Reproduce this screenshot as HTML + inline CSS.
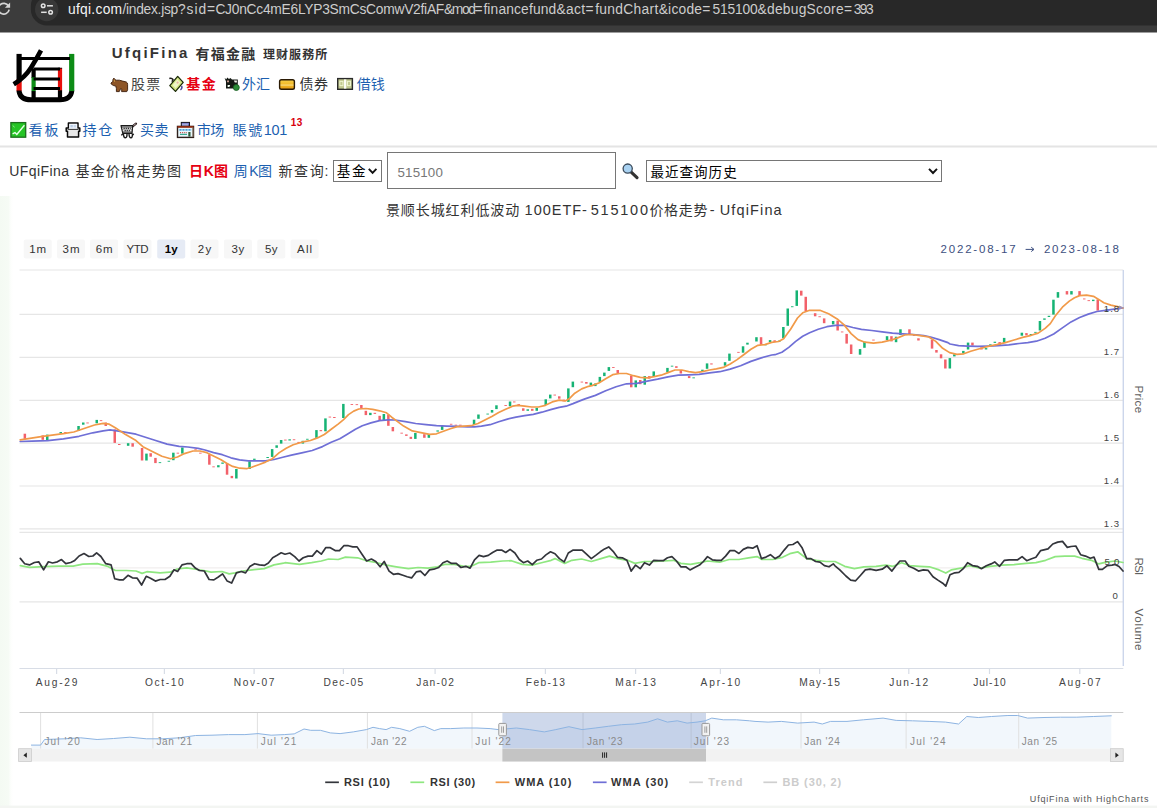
<!DOCTYPE html>
<html lang="zh"><head><meta charset="utf-8"><title>UfqiFina</title>
<style>
html,body{margin:0;padding:0;background:#fff}
body{width:1157px;height:808px;overflow:hidden;position:relative;font-family:"Liberation Sans","Noto Sans CJK SC",sans-serif}
text{font-family:"Liberation Sans","Noto Sans CJK SC",sans-serif;white-space:pre}
</style></head><body>
<svg width="1157" height="808" viewBox="0 0 1157 808" style="position:absolute;left:0;top:0;font-family:'Liberation Sans','Noto Sans CJK SC',sans-serif"><defs><linearGradient id="lt" x1="0" y1="0" x2="1" y2="0"><stop offset="0" stop-color="#f4faf3"/><stop offset="0.6" stop-color="#f6fbf5"/><stop offset="1" stop-color="#ffffff" stop-opacity="0"/></linearGradient></defs><rect x="0" y="196" width="14" height="612" fill="url(#lt)"/><rect x="0" y="805.6" width="1157" height="2.4" fill="#f3f5f2"/><rect x="0" y="0" width="1157" height="32.5" fill="#3c3c3c"/>
<rect x="30.9" y="-10" width="1200" height="35.4" rx="16" fill="#282828"/>
<circle cx="46.7" cy="9.6" r="11.7" fill="#383838"/>
<g stroke="#e2e2e2" stroke-width="1.5" fill="none"><circle cx="43.2" cy="5.8" r="1.8"/><path d="M47 5.8H52.9"/><circle cx="50.6" cy="12.3" r="1.8"/><path d="M41.1 12.3H46.7"/></g>
<path d="M8.5 6A5.4 5.4 0 1 0 9.15 9.7" stroke="#d6d6d6" stroke-width="1.7" fill="none"/><path d="M10.1 2.6V7.8H4.9z" fill="#d6d6d6"/>
<text y="13.9" style="font-size:13.8px;fill:#cdcdcd"><tspan x="68.00" style="letter-spacing:0.28px" fill="#f4f4f4">ufqi.com</tspan><tspan x="122.40" style="letter-spacing:-0.27px">/index.jsp</tspan><tspan x="178.00" style="letter-spacing:0.92px">?sid</tspan><tspan x="207.00" style="letter-spacing:0.34px">=</tspan><tspan x="215.40" style="letter-spacing:-0.26px">CJ0nCc4mE6LYP3SmCsComwV2fiAF</tspan><tspan x="444.00" style="letter-spacing:-1.41px">&amp;mod</tspan><tspan x="474.40" style="letter-spacing:0.94px">=</tspan><tspan x="483.40" style="letter-spacing:0.15px">financefund</tspan><tspan x="556.40" style="letter-spacing:0.35px">&amp;act</tspan><tspan x="585.40" style="letter-spacing:1.74px">=</tspan><tspan x="595.20" style="letter-spacing:0.32px">fundChart</tspan><tspan x="658.70" style="letter-spacing:0.23px">&amp;icode</tspan><tspan x="702.30" style="letter-spacing:2.14px">=</tspan><tspan x="712.50" style="letter-spacing:-0.18px">515100</tspan><tspan x="757.50" style="letter-spacing:0.25px">&amp;debugScore</tspan><tspan x="843.90" style="letter-spacing:1.74px">=</tspan><tspan x="853.70" style="letter-spacing:-1.57px">393</tspan></text>
<g fill="none" stroke-linecap="butt">
<path d="M19.1 53.9V80" stroke="#000" stroke-width="5.2"/>
<path d="M19.1 79.4V91.2" stroke="#e8100c" stroke-width="5.2"/>
<path d="M19.1 90.5V91.5Q20.5 99.8 31 99.8H60Q70.5 99.8 71.7 91.5V90.5" stroke="#000" stroke-width="5"/>
<path d="M71.7 53.9V91.1" stroke="#0d8c16" stroke-width="5.2"/>
<path d="M21 58.6H70" stroke="#000" stroke-width="3"/>
<path d="M41 50.4Q37 58 31 67.7T13.7 84.2" stroke="#000" stroke-width="4.6"/>
<path d="M33.6 68.6V78M33.6 91V99.8" stroke="#000" stroke-width="4.2"/>
<path d="M33.6 77.3V91.1" stroke="#0d8c16" stroke-width="4.2"/>
<path d="M60 67.7V69M60 90V99.8" stroke="#000" stroke-width="4.2"/>
<path d="M60 68.6V90.3" stroke="#e8100c" stroke-width="4.2"/>
<path d="M33.6 69H60M33.6 79H60M33.6 88.5H60" stroke="#000" stroke-width="3"/>
</g>
<text x="111.70" y="58.3" style="font-size:15px;fill:#333;font-weight:bold;letter-spacing:2.25px;">UfqiFina</text>
<text x="195.41" y="58.9" style="font-family:'Liberation Sans','Noto Sans CJK SC',sans-serif;font-size:14px;fill:#333;font-weight:bold;letter-spacing:1.29px;">有福金融</text>
<text x="262.88" y="58.9" style="font-family:'Liberation Sans','Noto Sans CJK SC',sans-serif;font-size:12px;fill:#333;font-weight:bold;letter-spacing:1.11px;">理财服務所</text>
<text x="131.01" y="89.0" style="font-family:'Liberation Sans','Noto Sans CJK SC',sans-serif;font-size:14px;fill:#444;letter-spacing:1.18px;">股票</text>
<text x="186.31" y="88.8" style="font-family:'Liberation Sans','Noto Sans CJK SC',sans-serif;font-size:14px;fill:#e60012;font-weight:bold;letter-spacing:1.38px;">基金</text>
<text x="242.01" y="89.0" style="font-family:'Liberation Sans','Noto Sans CJK SC',sans-serif;font-size:14px;fill:#1c5fb0;letter-spacing:-0.12px;">外汇</text>
<text x="299.41" y="89.0" style="font-family:'Liberation Sans','Noto Sans CJK SC',sans-serif;font-size:14px;fill:#333;letter-spacing:0.58px;">债券</text>
<text x="356.71" y="89.0" style="font-family:'Liberation Sans','Noto Sans CJK SC',sans-serif;font-size:14px;fill:#1c5fb0;letter-spacing:-0.02px;">借钱</text>
<text x="28.61" y="134.6" style="font-family:'Liberation Sans','Noto Sans CJK SC',sans-serif;font-size:14px;fill:#1c5fb0;letter-spacing:1.78px;">看板</text>
<text x="82.51" y="134.6" style="font-family:'Liberation Sans','Noto Sans CJK SC',sans-serif;font-size:14px;fill:#1c5fb0;letter-spacing:1.68px;">持仓</text>
<text x="140.01" y="134.6" style="font-family:'Liberation Sans','Noto Sans CJK SC',sans-serif;font-size:14px;fill:#1c5fb0;letter-spacing:0.58px;">买卖</text>
<text x="197.01" y="134.6" style="font-family:'Liberation Sans','Noto Sans CJK SC',sans-serif;font-size:14px;fill:#1c5fb0;letter-spacing:-0.72px;">市场</text>
<text x="232.81" y="134.6" style="font-family:'Liberation Sans','Noto Sans CJK TC','Noto Sans CJK SC',sans-serif;font-size:14px;fill:#1c5fb0;letter-spacing:1.48px;">賬號</text>
<text x="263.80" y="134.6" style="font-size:14.5px;fill:#1c5fb0;letter-spacing:-0.36px;">101</text>
<text x="290.80" y="125.5" style="font-size:10px;fill:#d8000c;font-weight:bold;letter-spacing:0.30px;">13</text>
<rect x="0" y="145.5" width="1157" height="2" fill="#e4e4e4"/>
<text x="9.30" y="176.3" style="font-size:14px;fill:#333;letter-spacing:0.41px;">UFqiFina</text>
<text x="75.51" y="176.3" style="font-family:'Liberation Sans','Noto Sans CJK SC',sans-serif;font-size:14px;fill:#333;letter-spacing:1.25px;">基金价格走势图</text>
<text x="188.91" y="176.3" style="font-family:'Liberation Sans','Noto Sans CJK SC',sans-serif;font-size:14px;fill:#e60012;font-weight:bold;">日</text>
<text x="203.80" y="176.3" style="font-size:14px;fill:#e60012;font-weight:bold;">K</text>
<text x="214.11" y="176.3" style="font-family:'Liberation Sans','Noto Sans CJK SC',sans-serif;font-size:14px;fill:#e60012;font-weight:bold;">图</text>
<text x="233.71" y="176.3" style="font-family:'Liberation Sans','Noto Sans CJK SC',sans-serif;font-size:14px;fill:#1c5fb0;">周</text>
<text x="249.20" y="176.3" style="font-size:14px;fill:#1c5fb0;">K</text>
<text x="258.11" y="176.3" style="font-family:'Liberation Sans','Noto Sans CJK SC',sans-serif;font-size:14px;fill:#1c5fb0;">图</text>
<text x="278.41" y="176.3" style="font-family:'Liberation Sans','Noto Sans CJK SC',sans-serif;font-size:14px;fill:#333;letter-spacing:1.64px;">新查询</text>
<text x="324.60" y="176.3" style="font-size:14px;fill:#333;">:</text>
<rect x="333.5" y="160.5" width="48" height="21" fill="#fff" stroke="#767676" stroke-width="1"/>
<text x="336.83" y="176.4" style="font-family:'Liberation Sans','Noto Sans CJK SC',sans-serif;font-size:13.5px;fill:#000;letter-spacing:1.64px;">基金</text>
<path d="M368.8 168.8L372.6 172.8L376.4 168.8" fill="none" stroke="#111" stroke-width="1.9"/>
<rect x="387.5" y="152.5" width="228" height="36" fill="#fff" stroke="#767676" stroke-width="1"/>
<text x="397.50" y="176.8" style="font-size:13.33px;fill:#777;letter-spacing:0.17px;">515100</text>
<g><path d="M631.2 172.2L637 177.6" stroke="#333" stroke-width="3.2" stroke-linecap="round"/><circle cx="627.7" cy="168.6" r="4.6" fill="#a9d2f2" stroke="#3a4a5a" stroke-width="1.3"/></g>
<rect x="646.5" y="160.5" width="295" height="21" fill="#fff" stroke="#767676" stroke-width="1"/>
<text x="650.43" y="176.6" style="font-family:'Liberation Sans','Noto Sans CJK SC',sans-serif;font-size:13.5px;fill:#000;letter-spacing:1.05px;">最近查询历史</text>
<path d="M929 168.8L933 173L937 168.8" fill="none" stroke="#111" stroke-width="1.9"/>
<text x="385.91" y="215.0" style="font-family:'Liberation Sans','Noto Sans CJK SC',sans-serif;font-size:14px;fill:#333;letter-spacing:0.92px;">景顺长城红利低波动</text>
<text x="524.60" y="215.2" style="font-size:14.5px;fill:#333;letter-spacing:0.98px;">100ETF-</text>
<text x="590.70" y="215.2" style="font-size:14.5px;fill:#333;letter-spacing:1.79px;">515100</text>
<text x="649.41" y="215.0" style="font-family:'Liberation Sans','Noto Sans CJK SC',sans-serif;font-size:14px;fill:#333;letter-spacing:0.7px;">价格走势</text>
<text x="709.80" y="215.2" style="font-size:14.5px;fill:#333;">-</text>
<text x="719.70" y="215.2" style="font-size:14.5px;fill:#333;letter-spacing:1.14px;">UfqiFina</text>
<path d="M113 79.4L113.9 78.1L115 79.7L116.4 80.2L119.4 80.2L122.6 81.1L126.3 82Q127.6 82.6 127.6 84.5L127.6 89.8L126.8 91.6L121.6 91.6L121.8 89.3L120.6 88.7L119.3 91.6L116.4 91.6L116.4 88.6L115.8 86.1L113.4 85.5L111.2 84L111 83L112.8 81.5Z" fill="#8d5527" stroke="#3a1c0a" stroke-width="0.9" stroke-linejoin="round"/><path d="M113.6 80.4L114.4 79.6L115.2 81.4L114.2 82Z" fill="#c79a4a"/>
<g><path d="M169.3 78.5Q171.6 77.5 173 79.5L172 81.8" fill="none" stroke="#222" stroke-width="1.5"/><path d="M181.5 86Q182.9 88.2 180.4 89.9" fill="none" stroke="#4a4a9a" stroke-width="1.4"/><path d="M177.7 76.4L183.2 82.4L175.5 91.4L169.8 85.6Z" fill="#d3e683" stroke="#1c2c08" stroke-width="1.3" stroke-linejoin="round"/><path d="M177.4 79.2L180.4 82.4L175.6 88.2L172.6 85.2Z" fill="#eef6c6"/><circle cx="177.6" cy="82.6" r="1.1" fill="#e9b0a0"/></g>
<g><path d="M224.6 78L226.4 79.2L227.2 77.6L229 79L230.4 78L232 79.4H237.8V88.6H226V81.5Z" fill="#141a14"/><path d="M233.8 80.4H236.9V82.4H234.8Z" fill="#f2f2ea"/><path d="M227.6 85H230.2L229.4 86.9H227.6Z" fill="#f4fff4"/><path d="M227 80.4H229V82.2H227Z" fill="#c89a90"/><circle cx="236.3" cy="87.5" r="3" fill="#2c8c38" stroke="#155a1e" stroke-width="0.8"/></g>
<defs><linearGradient id="cg" x1="0" y1="0" x2="0" y2="1"><stop offset="0" stop-color="#f7d04a"/><stop offset="0.45" stop-color="#f3bb2a"/><stop offset="0.55" stop-color="#fbe08a"/><stop offset="0.68" stop-color="#efb020"/><stop offset="1" stop-color="#e09612"/></linearGradient></defs><rect x="279.6" y="79.8" width="14.8" height="9.5" rx="1.8" fill="url(#cg)" stroke="#2a1a04" stroke-width="1.4"/>
<rect x="337.7" y="78.6" width="14.7" height="10.7" fill="#c2c990" stroke="#2a2a2a" stroke-width="1.4"/><rect x="344" y="79.4" width="2.3" height="9.2" fill="#fdfdf6"/><rect x="339.9" y="81.4" width="3" height="4.2" fill="none" stroke="#eef3cc" stroke-width="1"/><rect x="347.5" y="81.4" width="3" height="4.2" fill="none" stroke="#eef3cc" stroke-width="1"/>
<rect x="10.9" y="122.6" width="14.8" height="14.6" fill="#25c425" stroke="#1b6e1b" stroke-width="1.3"/><path d="M12.6 133.8L15 132.6L16.8 134.4L24.4 125.2" fill="none" stroke="#e9ffe9" stroke-width="1.4"/><path d="M13 125.5L14.4 127.4" stroke="#8fe88f" stroke-width="1"/>
<g><path d="M68.4 123H78V127.9H79.8V131.3H78.6V137H67.5V131.3H66.2V127.9H68.4Z" fill="#e8e8e8" stroke="#0a0a0a" stroke-width="1.5" stroke-linejoin="round"/><rect x="69.3" y="123.9" width="7.8" height="5" fill="#eef4fc"/><rect x="70.4" y="125" width="2.4" height="2.4" fill="#b8cce4"/><rect x="73.6" y="125" width="2.4" height="2.4" fill="#c8d8ec"/><path d="M67.6 129.4H78.6" stroke="#333" stroke-width="1"/></g>
<g><path d="M132.6 126.4L136 123.6" stroke="#2a1a1a" stroke-width="2.2" stroke-linecap="round"/><path d="M133.4 125.7L135.8 123.8" stroke="#e8d8d8" stroke-width="0.8"/><path d="M121 125.5H132.7L132 133.4H122.8Z" fill="#7c7c7c" stroke="#1c1c1c" stroke-width="1.2" stroke-linejoin="round"/><path d="M122.4 128.4H131.8M122.8 130.6H131.4" stroke="#e2e2e2" stroke-width="1.5"/><path d="M123.6 128.4H130.6M124.6 130.6H129.8" stroke="#111" stroke-width="1.1" stroke-dasharray="1.1 1"/><path d="M122.8 133.6L121.4 135.4M123.4 133.6Q123.6 137.8 125.4 137.8T127 133.8M129 133.8Q129.2 137.8 130.9 137.8T132.4 133.6M132.6 133.6L133.6 135.2" fill="none" stroke="#1a1a1a" stroke-width="1.4"/></g>
<g><rect x="181.3" y="122.4" width="8.2" height="4" fill="#6e74c4" stroke="#151520" stroke-width="1"/><path d="M183 123.6V126M185 123.6V126M187 123.6V126" stroke="#e8ecff" stroke-width="0.9"/><rect x="177.5" y="126.4" width="16" height="11" fill="#e9f7fb" stroke="#30201c" stroke-width="1.4"/><path d="M177.5 126.9H193.5" stroke="#8c2a10" stroke-width="1.8"/><path d="M179.4 129.8H191.6" stroke="#4aa2dc" stroke-width="1.8" stroke-dasharray="2.2 0.8"/><path d="M180 132.6H187" stroke="#c05050" stroke-width="1.4" stroke-dasharray="1 0.9"/><path d="M180 134.4H187" stroke="#3aa890" stroke-width="1.2"/><rect x="188.3" y="132" width="2.2" height="4.6" fill="#2c5a3a"/><path d="M192.9 127.6V137" stroke="#8a7a6a" stroke-width="1.2"/></g>
<path d="M19.5 270.0H1123.3" stroke="#e6e6e6" stroke-width="1.2"/>
<path d="M19.5 314.3H1123.3" stroke="#e6e6e6" stroke-width="1.2"/>
<path d="M19.5 357.3H1123.3" stroke="#e6e6e6" stroke-width="1.2"/>
<path d="M19.5 400.4H1123.3" stroke="#e6e6e6" stroke-width="1.2"/>
<path d="M19.5 443.1H1123.3" stroke="#e6e6e6" stroke-width="1.2"/>
<path d="M19.5 486.0H1123.3" stroke="#e6e6e6" stroke-width="1.2"/>
<path d="M19.5 528.9H1123.3" stroke="#e6e6e6" stroke-width="1.2"/>
<path d="M19.5 532.4H1123.3" stroke="#e6e6e6" stroke-width="1.2"/>
<path d="M19.5 567.8H1123.3" stroke="#f1eeee" stroke-width="1.2"/>
<path d="M19.5 601.8H1123.3" stroke="#e6e6e6" stroke-width="1.2"/>
<path d="M1123.3 270V666" stroke="#ccd6eb" stroke-width="1.4"/>
<path d="M19.5 668.5H1123.3" stroke="#d8dde6" stroke-width="1.2"/>
<path d="M56.6 668.5V674" stroke="#d8dde6" stroke-width="1.2"/>
<text x="35.80" y="685.6" style="font-size:10.2px;fill:#444;letter-spacing:1.74px;">Aug-29</text>
<path d="M164.4 668.5V674" stroke="#d8dde6" stroke-width="1.2"/>
<text x="145.10" y="685.6" style="font-size:10.2px;fill:#444;letter-spacing:1.60px;">Oct-10</text>
<path d="M254.1 668.5V674" stroke="#d8dde6" stroke-width="1.2"/>
<text x="233.80" y="685.6" style="font-size:10.2px;fill:#444;letter-spacing:1.54px;">Nov-07</text>
<path d="M343.4 668.5V674" stroke="#d8dde6" stroke-width="1.2"/>
<text x="323.60" y="685.6" style="font-size:10.2px;fill:#444;letter-spacing:1.34px;">Dec-05</text>
<path d="M435.1 668.5V674" stroke="#d8dde6" stroke-width="1.2"/>
<text x="416.30" y="685.6" style="font-size:10.2px;fill:#444;letter-spacing:1.28px;">Jan-02</text>
<path d="M545.4 668.5V674" stroke="#d8dde6" stroke-width="1.2"/>
<text x="525.85" y="685.6" style="font-size:10.2px;fill:#444;letter-spacing:1.35px;">Feb-13</text>
<path d="M635.6 668.5V674" stroke="#d8dde6" stroke-width="1.2"/>
<text x="615.30" y="685.6" style="font-size:10.2px;fill:#444;letter-spacing:1.65px;">Mar-13</text>
<path d="M720.4 668.5V674" stroke="#d8dde6" stroke-width="1.2"/>
<text x="700.60" y="685.6" style="font-size:10.2px;fill:#444;letter-spacing:1.80px;">Apr-10</text>
<path d="M819.6 668.5V674" stroke="#d8dde6" stroke-width="1.2"/>
<text x="799.30" y="685.6" style="font-size:10.2px;fill:#444;letter-spacing:1.32px;">May-15</text>
<path d="M908.8 668.5V674" stroke="#d8dde6" stroke-width="1.2"/>
<text x="889.30" y="685.6" style="font-size:10.2px;fill:#444;letter-spacing:1.56px;">Jun-12</text>
<path d="M989.5 668.5V674" stroke="#d8dde6" stroke-width="1.2"/>
<text x="973.20" y="685.6" style="font-size:10.2px;fill:#444;letter-spacing:0.96px;">Jul-10</text>
<path d="M1079.8 668.5V674" stroke="#d8dde6" stroke-width="1.2"/>
<text x="1059.00" y="685.6" style="font-size:10.2px;fill:#444;letter-spacing:1.74px;">Aug-07</text>
<text x="-0.00" y="0" style="font-size:11.6px;fill:#606060;letter-spacing:0.34px;" transform="translate(1134.5 385.4) rotate(90)">Price</text>
<text x="-0.00" y="0" style="font-size:11.6px;fill:#606060;letter-spacing:-0.91px;" transform="translate(1134.5 557.6) rotate(90)">RSI</text>
<text x="-0.00" y="0" style="font-size:11.6px;fill:#606060;letter-spacing:0.66px;" transform="translate(1134.5 608.6) rotate(90)">Volume</text>
<rect x="23.7" y="239.4" width="28" height="19.2" rx="2" fill="#f7f7f7"/>
<text x="29.30" y="253.4" style="font-size:11.5px;fill:#333;letter-spacing:0.81px;">1m</text>
<rect x="57.0" y="239.4" width="28" height="19.2" rx="2" fill="#f7f7f7"/>
<text x="62.45" y="253.4" style="font-size:11.5px;fill:#333;letter-spacing:1.11px;">3m</text>
<rect x="90.1" y="239.4" width="28" height="19.2" rx="2" fill="#f7f7f7"/>
<text x="95.70" y="253.4" style="font-size:11.5px;fill:#333;letter-spacing:0.82px;">6m</text>
<rect x="123.5" y="239.4" width="28" height="19.2" rx="2" fill="#f7f7f7"/>
<text x="126.50" y="253.4" style="font-size:11.5px;fill:#333;letter-spacing:-0.50px;">YTD</text>
<rect x="157.2" y="239.4" width="28" height="19.2" rx="2" fill="#e6ebf5"/>
<text x="164.80" y="253.4" style="font-size:11.5px;fill:#000;font-weight:bold;letter-spacing:0.04px;">1y</text>
<rect x="190.5" y="239.4" width="28" height="19.2" rx="2" fill="#f7f7f7"/>
<text x="197.80" y="253.4" style="font-size:11.5px;fill:#333;letter-spacing:1.27px;">2y</text>
<rect x="223.9" y="239.4" width="28" height="19.2" rx="2" fill="#f7f7f7"/>
<text x="231.50" y="253.4" style="font-size:11.5px;fill:#333;letter-spacing:0.67px;">3y</text>
<rect x="257.3" y="239.4" width="28" height="19.2" rx="2" fill="#f7f7f7"/>
<text x="265.05" y="253.4" style="font-size:11.5px;fill:#333;letter-spacing:0.37px;">5y</text>
<rect x="290.6" y="239.4" width="28" height="19.2" rx="2" fill="#f7f7f7"/>
<text x="297.05" y="253.4" style="font-size:11.5px;fill:#333;letter-spacing:1.17px;">All</text>
<text x="940.60" y="253.2" style="font-size:11.5px;fill:#3d4f80;letter-spacing:1.79px;">2022-08-17</text>
<path d="M1025.6 249.4H1033.6M1031.2 247.2L1034 249.4L1031.2 251.6" fill="none" stroke="#3d4f80" stroke-width="1"/>
<text x="1043.90" y="253.2" style="font-size:11.5px;fill:#3d4f80;letter-spacing:1.79px;">2023-08-18</text>
<rect x="23.6" y="433.7" width="2.5" height="5.2" fill="#f2616a"/>
<rect x="41.5" y="435.4" width="2.5" height="4.4" fill="#f2616a"/>
<rect x="46.0" y="434.6" width="2.5" height="6.0" fill="#16b374"/>
<rect x="59.5" y="432.0" width="2.5" height="1.4" fill="#16b374"/>
<rect x="64.2" y="432.0" width="2.5" height="1.4" fill="#f2616a"/>
<rect x="77.3" y="426.0" width="2.5" height="5.0" fill="#16b374"/>
<rect x="82.0" y="422.5" width="2.5" height="2.2" fill="#16b374"/>
<rect x="86.3" y="422.5" width="2.5" height="0.9" fill="#f2616a"/>
<rect x="95.5" y="419.9" width="2.5" height="3.4" fill="#16b374"/>
<rect x="99.8" y="420.2" width="2.5" height="0.9" fill="#f2616a"/>
<rect x="104.5" y="422.5" width="2.5" height="3.5" fill="#f2616a"/>
<rect x="113.5" y="429.4" width="2.5" height="13.5" fill="#f2616a"/>
<rect x="118.0" y="444.0" width="2.5" height="1.0" fill="#f2616a"/>
<rect x="126.9" y="443.2" width="2.5" height="2.6" fill="#16b374"/>
<rect x="131.4" y="443.2" width="2.5" height="3.5" fill="#f2616a"/>
<rect x="140.8" y="448.0" width="2.5" height="12.5" fill="#f2616a"/>
<rect x="145.2" y="453.6" width="2.5" height="6.9" fill="#16b374"/>
<rect x="149.4" y="453.2" width="2.5" height="3.5" fill="#f2616a"/>
<rect x="154.2" y="457.9" width="2.5" height="5.2" fill="#f2616a"/>
<rect x="158.7" y="462.2" width="2.5" height="0.9" fill="#16b374"/>
<rect x="167.6" y="460.8" width="2.5" height="0.9" fill="#16b374"/>
<rect x="172.1" y="452.7" width="2.5" height="7.5" fill="#16b374"/>
<rect x="176.6" y="452.7" width="2.5" height="0.9" fill="#f2616a"/>
<rect x="181.1" y="447.5" width="2.5" height="6.1" fill="#16b374"/>
<rect x="194.3" y="449.3" width="2.5" height="0.9" fill="#f2616a"/>
<rect x="199.1" y="452.7" width="2.5" height="0.9" fill="#f2616a"/>
<rect x="208.1" y="454.3" width="2.5" height="10.4" fill="#f2616a"/>
<rect x="212.3" y="466.4" width="2.5" height="0.9" fill="#f2616a"/>
<rect x="217.1" y="465.2" width="2.5" height="2.1" fill="#16b374"/>
<rect x="221.3" y="462.5" width="2.5" height="1.3" fill="#16b374"/>
<rect x="225.8" y="463.0" width="2.5" height="11.7" fill="#f2616a"/>
<rect x="230.6" y="475.9" width="2.5" height="2.3" fill="#f2616a"/>
<rect x="235.1" y="469.0" width="2.5" height="9.5" fill="#16b374"/>
<rect x="248.3" y="461.2" width="2.5" height="7.8" fill="#16b374"/>
<rect x="253.1" y="458.7" width="2.5" height="1.2" fill="#16b374"/>
<rect x="266.4" y="457.0" width="2.5" height="1.0" fill="#16b374"/>
<rect x="270.9" y="449.1" width="2.5" height="7.8" fill="#16b374"/>
<rect x="275.4" y="445.3" width="2.5" height="2.5" fill="#16b374"/>
<rect x="279.9" y="440.0" width="2.5" height="3.6" fill="#16b374"/>
<rect x="284.1" y="439.6" width="2.5" height="0.9" fill="#f2616a"/>
<rect x="288.4" y="439.3" width="2.5" height="1.2" fill="#16b374"/>
<rect x="292.8" y="439.3" width="2.5" height="0.9" fill="#f2616a"/>
<rect x="297.4" y="441.9" width="2.5" height="1.0" fill="#f2616a"/>
<rect x="301.6" y="440.8" width="2.5" height="2.8" fill="#16b374"/>
<rect x="306.1" y="438.8" width="2.5" height="0.9" fill="#16b374"/>
<rect x="315.2" y="430.1" width="2.5" height="7.8" fill="#16b374"/>
<rect x="319.6" y="430.1" width="2.5" height="1.1" fill="#f2616a"/>
<rect x="324.2" y="418.4" width="2.5" height="12.9" fill="#16b374"/>
<rect x="328.6" y="416.6" width="2.5" height="0.9" fill="#f2616a"/>
<rect x="333.1" y="417.0" width="2.5" height="1.0" fill="#f2616a"/>
<rect x="342.1" y="403.9" width="2.5" height="14.1" fill="#16b374"/>
<rect x="350.6" y="404.0" width="2.5" height="0.9" fill="#f2616a"/>
<rect x="355.6" y="404.2" width="2.5" height="0.9" fill="#f2616a"/>
<rect x="360.1" y="405.0" width="2.5" height="3.5" fill="#f2616a"/>
<rect x="364.6" y="410.8" width="2.5" height="4.3" fill="#f2616a"/>
<rect x="369.1" y="412.8" width="2.5" height="2.3" fill="#16b374"/>
<rect x="373.6" y="412.8" width="2.5" height="1.1" fill="#f2616a"/>
<rect x="378.4" y="415.8" width="2.5" height="4.3" fill="#f2616a"/>
<rect x="382.6" y="414.0" width="2.5" height="6.1" fill="#16b374"/>
<rect x="387.1" y="414.6" width="2.5" height="11.2" fill="#f2616a"/>
<rect x="391.6" y="427.0" width="2.5" height="4.3" fill="#f2616a"/>
<rect x="400.4" y="432.7" width="2.5" height="0.9" fill="#f2616a"/>
<rect x="405.1" y="434.4" width="2.5" height="1.5" fill="#f2616a"/>
<rect x="409.6" y="436.8" width="2.5" height="2.1" fill="#f2616a"/>
<rect x="414.1" y="433.0" width="2.5" height="5.9" fill="#16b374"/>
<rect x="423.1" y="434.2" width="2.5" height="3.6" fill="#f2616a"/>
<rect x="427.6" y="434.2" width="2.5" height="3.6" fill="#16b374"/>
<rect x="436.4" y="430.4" width="2.5" height="1.2" fill="#16b374"/>
<rect x="440.9" y="425.5" width="2.5" height="4.4" fill="#16b374"/>
<rect x="449.9" y="423.8" width="2.5" height="0.9" fill="#f2616a"/>
<rect x="454.6" y="424.7" width="2.5" height="0.9" fill="#f2616a"/>
<rect x="459.1" y="424.7" width="2.5" height="0.9" fill="#f2616a"/>
<rect x="472.8" y="419.7" width="2.5" height="5.0" fill="#16b374"/>
<rect x="477.2" y="414.5" width="2.5" height="4.3" fill="#16b374"/>
<rect x="486.4" y="413.6" width="2.5" height="0.9" fill="#16b374"/>
<rect x="490.8" y="410.0" width="2.5" height="2.6" fill="#16b374"/>
<rect x="495.2" y="405.3" width="2.5" height="3.8" fill="#16b374"/>
<rect x="504.4" y="405.0" width="2.5" height="0.9" fill="#f2616a"/>
<rect x="508.8" y="401.5" width="2.5" height="4.7" fill="#16b374"/>
<rect x="513.0" y="401.5" width="2.5" height="0.9" fill="#f2616a"/>
<rect x="517.5" y="404.1" width="2.5" height="1.6" fill="#f2616a"/>
<rect x="522.0" y="408.3" width="2.5" height="2.5" fill="#f2616a"/>
<rect x="526.5" y="409.3" width="2.5" height="1.5" fill="#16b374"/>
<rect x="531.0" y="408.8" width="2.5" height="2.0" fill="#f2616a"/>
<rect x="535.5" y="407.9" width="2.5" height="2.9" fill="#16b374"/>
<rect x="544.5" y="399.3" width="2.5" height="5.7" fill="#16b374"/>
<rect x="549.0" y="394.6" width="2.5" height="3.8" fill="#16b374"/>
<rect x="553.5" y="394.6" width="2.5" height="0.9" fill="#f2616a"/>
<rect x="558.0" y="396.3" width="2.5" height="2.4" fill="#f2616a"/>
<rect x="562.5" y="399.6" width="2.5" height="1.7" fill="#f2616a"/>
<rect x="567.1" y="388.4" width="2.5" height="13.5" fill="#16b374"/>
<rect x="571.6" y="381.6" width="2.5" height="5.6" fill="#16b374"/>
<rect x="580.6" y="381.6" width="2.5" height="0.9" fill="#f2616a"/>
<rect x="585.1" y="382.0" width="2.5" height="1.7" fill="#f2616a"/>
<rect x="589.6" y="382.6" width="2.5" height="3.3" fill="#16b374"/>
<rect x="594.1" y="383.5" width="2.5" height="2.6" fill="#16b374"/>
<rect x="598.6" y="376.9" width="2.5" height="5.2" fill="#16b374"/>
<rect x="603.1" y="372.6" width="2.5" height="3.5" fill="#16b374"/>
<rect x="607.6" y="367.1" width="2.5" height="3.8" fill="#16b374"/>
<rect x="612.1" y="367.1" width="2.5" height="0.9" fill="#f2616a"/>
<rect x="616.5" y="370.0" width="2.5" height="3.5" fill="#f2616a"/>
<rect x="630.0" y="375.5" width="2.5" height="11.8" fill="#f2616a"/>
<rect x="634.5" y="380.4" width="2.5" height="6.9" fill="#16b374"/>
<rect x="639.0" y="380.0" width="2.5" height="4.2" fill="#f2616a"/>
<rect x="643.5" y="376.1" width="2.5" height="8.6" fill="#16b374"/>
<rect x="648.0" y="376.1" width="2.5" height="2.6" fill="#f2616a"/>
<rect x="652.5" y="371.4" width="2.5" height="5.5" fill="#16b374"/>
<rect x="666.2" y="367.9" width="2.5" height="4.4" fill="#16b374"/>
<rect x="670.8" y="365.7" width="2.5" height="0.9" fill="#16b374"/>
<rect x="675.1" y="366.2" width="2.5" height="1.7" fill="#f2616a"/>
<rect x="679.6" y="370.0" width="2.5" height="3.5" fill="#f2616a"/>
<rect x="687.9" y="376.1" width="2.5" height="2.0" fill="#f2616a"/>
<rect x="692.4" y="377.4" width="2.5" height="0.9" fill="#16b374"/>
<rect x="701.2" y="369.7" width="2.5" height="2.0" fill="#16b374"/>
<rect x="705.8" y="363.4" width="2.5" height="5.4" fill="#16b374"/>
<rect x="710.2" y="363.4" width="2.5" height="1.1" fill="#f2616a"/>
<rect x="723.8" y="362.2" width="2.5" height="3.5" fill="#16b374"/>
<rect x="728.2" y="353.6" width="2.5" height="7.2" fill="#16b374"/>
<rect x="737.2" y="351.9" width="2.5" height="0.9" fill="#f2616a"/>
<rect x="741.8" y="346.3" width="2.5" height="6.4" fill="#16b374"/>
<rect x="746.2" y="342.7" width="2.5" height="1.9" fill="#16b374"/>
<rect x="755.2" y="337.2" width="2.5" height="4.3" fill="#16b374"/>
<rect x="759.8" y="337.2" width="2.5" height="7.7" fill="#f2616a"/>
<rect x="764.4" y="344.1" width="2.5" height="1.2" fill="#16b374"/>
<rect x="768.8" y="340.1" width="2.5" height="1.9" fill="#16b374"/>
<rect x="773.4" y="340.3" width="2.5" height="1.7" fill="#f2616a"/>
<rect x="777.9" y="340.6" width="2.5" height="1.4" fill="#16b374"/>
<rect x="782.1" y="327.0" width="2.5" height="11.2" fill="#16b374"/>
<rect x="786.5" y="308.5" width="2.5" height="17.3" fill="#16b374"/>
<rect x="791.0" y="306.3" width="2.5" height="0.9" fill="#16b374"/>
<rect x="795.5" y="290.4" width="2.5" height="15.5" fill="#16b374"/>
<rect x="800.0" y="290.7" width="2.5" height="4.9" fill="#f2616a"/>
<rect x="804.5" y="296.8" width="2.5" height="14.3" fill="#f2616a"/>
<rect x="813.9" y="313.2" width="2.5" height="3.1" fill="#f2616a"/>
<rect x="818.4" y="316.3" width="2.5" height="0.9" fill="#f2616a"/>
<rect x="822.9" y="318.4" width="2.5" height="4.8" fill="#f2616a"/>
<rect x="831.9" y="321.0" width="2.5" height="3.4" fill="#16b374"/>
<rect x="836.4" y="320.6" width="2.5" height="9.9" fill="#f2616a"/>
<rect x="840.9" y="331.5" width="2.5" height="0.9" fill="#f2616a"/>
<rect x="845.4" y="333.9" width="2.5" height="9.7" fill="#f2616a"/>
<rect x="849.9" y="344.5" width="2.5" height="9.5" fill="#f2616a"/>
<rect x="858.8" y="349.1" width="2.5" height="5.6" fill="#16b374"/>
<rect x="863.2" y="341.7" width="2.5" height="6.1" fill="#16b374"/>
<rect x="872.2" y="339.6" width="2.5" height="0.9" fill="#f2616a"/>
<rect x="885.8" y="336.2" width="2.5" height="3.8" fill="#16b374"/>
<rect x="890.2" y="336.2" width="2.5" height="5.2" fill="#f2616a"/>
<rect x="894.8" y="336.7" width="2.5" height="5.5" fill="#16b374"/>
<rect x="899.2" y="329.3" width="2.5" height="5.7" fill="#16b374"/>
<rect x="908.2" y="329.3" width="2.5" height="5.2" fill="#f2616a"/>
<rect x="912.8" y="335.0" width="2.5" height="0.9" fill="#f2616a"/>
<rect x="917.2" y="338.3" width="2.5" height="2.2" fill="#f2616a"/>
<rect x="930.8" y="339.6" width="2.5" height="9.0" fill="#f2616a"/>
<rect x="935.2" y="350.0" width="2.5" height="2.6" fill="#f2616a"/>
<rect x="939.8" y="354.3" width="2.5" height="4.0" fill="#f2616a"/>
<rect x="944.1" y="359.5" width="2.5" height="9.0" fill="#f2616a"/>
<rect x="948.6" y="358.1" width="2.5" height="10.4" fill="#16b374"/>
<rect x="953.1" y="354.3" width="2.5" height="2.1" fill="#16b374"/>
<rect x="962.1" y="350.9" width="2.5" height="2.5" fill="#16b374"/>
<rect x="966.8" y="342.6" width="2.5" height="6.9" fill="#16b374"/>
<rect x="971.2" y="342.6" width="2.5" height="2.9" fill="#f2616a"/>
<rect x="980.2" y="347.4" width="2.5" height="2.1" fill="#f2616a"/>
<rect x="984.8" y="348.1" width="2.5" height="1.4" fill="#16b374"/>
<rect x="989.1" y="344.3" width="2.5" height="1.8" fill="#16b374"/>
<rect x="993.6" y="341.7" width="2.5" height="1.2" fill="#16b374"/>
<rect x="998.4" y="342.1" width="2.5" height="3.4" fill="#f2616a"/>
<rect x="1002.9" y="337.9" width="2.5" height="4.7" fill="#16b374"/>
<rect x="1020.6" y="332.7" width="2.5" height="3.0" fill="#16b374"/>
<rect x="1025.2" y="333.1" width="2.5" height="2.2" fill="#f2616a"/>
<rect x="1029.7" y="334.0" width="2.5" height="1.7" fill="#16b374"/>
<rect x="1034.2" y="331.9" width="2.5" height="0.9" fill="#16b374"/>
<rect x="1038.7" y="321.0" width="2.5" height="9.5" fill="#16b374"/>
<rect x="1043.2" y="318.4" width="2.5" height="1.4" fill="#16b374"/>
<rect x="1047.7" y="315.8" width="2.5" height="1.2" fill="#16b374"/>
<rect x="1052.2" y="299.7" width="2.5" height="14.9" fill="#16b374"/>
<rect x="1056.7" y="292.1" width="2.5" height="5.6" fill="#16b374"/>
<rect x="1065.7" y="291.1" width="2.5" height="3.4" fill="#f2616a"/>
<rect x="1070.2" y="291.1" width="2.5" height="3.4" fill="#16b374"/>
<rect x="1078.3" y="291.1" width="2.5" height="4.8" fill="#f2616a"/>
<rect x="1083.0" y="298.5" width="2.5" height="0.9" fill="#f2616a"/>
<rect x="1087.5" y="300.2" width="2.5" height="0.9" fill="#f2616a"/>
<rect x="1092.0" y="299.7" width="2.5" height="1.4" fill="#16b374"/>
<rect x="1096.5" y="299.4" width="2.5" height="11.2" fill="#f2616a"/>
<rect x="1105.5" y="308.9" width="2.5" height="3.1" fill="#16b374"/>
<path d="M20.2 441.5 L32.3 441.1 L47.8 440.6 L63.4 438.9 L79.0 436.3 L92.8 432.8 L103.2 430.8 L110.0 429.9 L118.7 431.1 L136.0 434.2 L153.3 439.8 L167.1 444.1 L179.2 446.3 L187.9 447.0 L198.2 448.4 L205.0 450.0 L213.6 452.6 L222.3 454.7 L230.9 457.8 L239.6 459.9 L248.2 460.9 L256.9 460.9 L265.5 460.9 L274.1 459.5 L282.8 457.3 L291.4 455.2 L301.8 452.9 L312.2 450.5 L322.5 446.6 L331.2 442.2 L339.8 438.8 L348.5 433.6 L355.4 429.3 L362.3 425.8 L370.9 422.9 L379.6 420.6 L388.2 419.8 L395.0 420.0 L405.4 421.7 L415.7 423.5 L426.1 424.7 L436.5 425.7 L446.9 426.1 L457.2 426.4 L467.6 426.9 L474.5 426.9 L481.4 426.1 L490.1 424.7 L498.7 421.7 L507.4 419.1 L516.0 417.1 L524.6 415.7 L533.3 414.3 L541.9 412.2 L550.6 409.6 L559.2 407.4 L566.1 406.2 L573.0 403.6 L581.7 400.1 L585.0 398.9 L595.4 395.4 L605.7 390.8 L616.1 386.8 L626.5 383.8 L636.9 383.3 L647.2 381.2 L657.6 379.2 L668.0 376.9 L678.3 375.2 L688.7 374.8 L699.1 374.3 L709.5 372.9 L719.8 371.7 L730.2 369.1 L740.6 365.7 L750.9 361.4 L761.3 357.9 L771.7 355.0 L775.0 354.7 L781.9 352.3 L788.8 347.4 L795.7 341.4 L802.7 336.2 L809.6 332.7 L818.2 329.3 L826.9 326.7 L835.5 325.3 L844.1 325.3 L852.8 327.5 L861.4 329.3 L871.8 330.5 L882.2 331.9 L892.5 333.2 L902.9 333.9 L913.3 334.5 L923.7 335.7 L930.6 337.0 L939.2 339.6 L947.9 342.6 L950.0 344.0 L958.6 345.7 L967.3 346.1 L977.7 346.4 L988.0 346.1 L998.4 345.7 L1008.8 344.8 L1019.1 343.5 L1027.8 342.6 L1036.4 341.2 L1045.1 338.3 L1053.7 334.0 L1062.4 327.9 L1071.0 321.9 L1079.6 317.5 L1088.3 314.1 L1096.9 311.5 L1105.6 310.3 L1114.2 309.2 L1122.9 308.0" fill="none" stroke="#6f6fd6" stroke-width="1.7" stroke-linejoin="round" stroke-linecap="round"/>
<path d="M20.2 439.8 L42.7 436.3 L63.4 433.7 L73.8 432.0 L84.1 428.5 L94.5 425.0 L103.2 423.3 L109.2 424.2 L115.3 427.7 L125.6 434.6 L136.0 440.6 L142.9 446.7 L153.3 451.9 L161.9 456.2 L170.6 458.8 L177.5 457.0 L184.4 453.6 L193.0 451.0 L200.0 451.0 L206.9 452.7 L211.9 455.2 L220.6 459.5 L227.5 463.8 L232.7 466.4 L239.6 468.2 L246.5 468.7 L251.7 467.3 L258.6 464.7 L265.5 462.1 L272.4 458.7 L279.3 452.6 L286.2 448.3 L293.2 444.8 L301.8 442.2 L310.4 440.5 L317.4 437.9 L324.3 434.5 L331.2 429.3 L338.1 424.1 L343.3 419.8 L348.5 414.6 L353.7 411.1 L358.8 409.0 L365.8 408.5 L372.7 409.4 L379.6 410.8 L386.5 412.8 L391.7 417.2 L398.6 422.4 L403.6 426.1 L412.3 430.9 L420.9 432.6 L429.6 434.4 L436.5 433.8 L443.4 431.2 L450.3 428.7 L457.2 426.6 L464.1 426.1 L471.1 425.7 L478.0 423.5 L484.9 420.0 L491.8 416.6 L498.7 412.6 L505.6 409.3 L512.5 406.2 L517.7 405.3 L524.6 406.2 L531.6 407.0 L538.5 407.0 L545.4 405.3 L552.3 401.9 L559.2 400.1 L565.3 401.0 L569.6 398.4 L574.8 393.2 L581.7 388.9 L588.6 386.3 L591.9 385.6 L598.8 383.0 L605.7 378.7 L612.7 374.7 L619.6 373.5 L626.5 373.5 L633.4 375.7 L640.3 377.4 L647.2 377.8 L654.1 376.6 L661.1 375.2 L668.0 372.6 L674.9 370.0 L681.8 370.0 L688.7 371.7 L695.6 372.6 L702.5 371.7 L709.5 370.0 L716.4 368.8 L723.3 367.4 L730.2 364.0 L737.1 359.6 L744.0 354.5 L750.9 349.3 L757.9 345.3 L764.8 344.6 L771.7 342.4 L778.6 341.5 L783.6 338.8 L790.6 329.3 L797.5 318.0 L802.7 312.8 L809.6 310.3 L819.9 310.3 L828.6 313.7 L837.2 318.9 L844.1 324.9 L851.1 333.6 L858.0 339.6 L864.9 342.2 L873.5 343.1 L882.2 342.2 L890.8 340.2 L897.7 337.9 L904.7 335.0 L911.6 334.5 L920.2 335.7 L928.8 337.0 L935.8 341.4 L942.7 348.3 L949.6 352.6 L956.9 354.4 L963.8 353.8 L970.7 351.2 L979.4 348.7 L988.0 346.4 L996.7 344.7 L1005.3 342.6 L1014.0 340.0 L1022.6 337.4 L1031.2 335.3 L1038.2 333.1 L1045.1 328.4 L1050.3 323.6 L1055.4 315.8 L1062.4 307.2 L1069.3 301.1 L1074.5 297.7 L1079.6 295.6 L1086.6 295.1 L1093.5 296.3 L1098.7 299.4 L1103.8 302.8 L1110.8 305.1 L1117.7 306.6 L1122.9 308.0" fill="none" stroke="#f19a49" stroke-width="1.7" stroke-linejoin="round" stroke-linecap="round"/>
<path d="M20.3 565.7 L29.5 567.4 L44.0 566.6 L58.6 566.1 L73.1 566.1 L82.8 564.2 L97.3 563.7 L107.0 566.1 L115.4 570.5 L126.3 570.5 L136.0 571.0 L142.1 573.4 L146.9 571.7 L160.2 572.9 L169.9 572.2 L177.2 569.0 L186.8 567.8 L194.1 569.0 L203.8 570.5 L211.0 572.2 L221.9 571.5 L229.2 573.9 L235.2 572.9 L242.5 571.0 L252.2 569.8 L264.3 568.6 L274.0 564.9 L283.6 563.2 L285.0 562.7 L299.5 564.4 L311.6 562.7 L321.3 561.0 L328.6 559.0 L338.2 559.5 L345.5 557.1 L357.6 557.8 L367.3 561.0 L377.0 562.7 L386.6 565.1 L396.3 566.8 L408.4 568.7 L418.1 567.5 L427.8 568.2 L437.5 566.8 L444.7 564.4 L454.4 564.4 L464.1 566.3 L471.3 566.3 L478.6 562.7 L490.7 562.2 L502.8 561.0 L511.3 560.7 L522.2 564.4 L531.9 565.1 L541.5 562.7 L551.2 560.3 L555.0 558.6 L564.7 563.4 L571.9 560.3 L581.6 559.0 L591.3 561.5 L601.0 558.6 L609.5 556.1 L617.9 558.6 L627.6 560.3 L634.9 563.4 L644.5 561.5 L654.2 561.5 L663.9 561.0 L673.6 560.3 L680.8 563.4 L690.5 564.4 L700.2 562.7 L707.5 561.0 L719.6 562.2 L729.2 559.5 L738.9 559.5 L748.6 557.8 L757.1 556.6 L761.9 559.5 L772.8 559.5 L782.5 557.3 L789.8 553.7 L797.7 551.8 L806.7 558.6 L816.4 560.3 L826.1 561.5 L835.0 561.5 L844.7 566.3 L854.4 568.7 L864.0 566.8 L876.1 566.3 L885.8 565.1 L893.1 566.3 L901.6 562.7 L910.0 565.6 L919.7 566.3 L929.4 566.8 L939.1 569.9 L945.8 573.1 L951.2 569.9 L960.8 568.2 L969.3 565.6 L980.2 568.2 L989.9 566.3 L1002.0 565.1 L1014.1 564.6 L1026.2 563.4 L1035.9 562.7 L1045.6 560.3 L1055.2 556.6 L1064.9 556.1 L1074.6 556.1 L1081.9 558.3 L1091.5 560.3 L1098.8 563.9 L1106.1 562.2 L1115.0 561.0 L1123.0 562.5" fill="none" stroke="#8fe780" stroke-width="1.7" stroke-linejoin="round" stroke-linecap="round"/>
<path d="M20.3 558.4 L24.7 563.7 L29.5 564.9 L34.4 562.5 L38.7 561.8 L43.6 569.8 L48.4 561.8 L52.5 563.0 L57.4 561.8 L61.5 559.6 L65.8 563.7 L70.7 562.5 L74.3 560.8 L79.1 556.0 L84.0 553.6 L88.8 556.5 L92.9 556.0 L96.6 552.8 L100.9 556.5 L105.8 563.7 L111.1 564.9 L114.7 578.7 L119.5 579.9 L123.2 579.9 L128.0 575.3 L132.4 577.8 L137.2 578.2 L141.6 585.0 L146.2 576.3 L150.5 578.2 L155.4 581.1 L160.2 579.5 L165.0 579.5 L169.9 576.3 L174.0 569.8 L177.6 571.5 L182.0 564.9 L186.8 563.7 L191.2 563.7 L195.3 568.1 L199.4 570.5 L204.3 571.0 L209.1 579.5 L213.9 579.9 L218.3 577.0 L222.6 573.9 L227.2 581.1 L231.6 583.1 L236.4 572.9 L241.3 571.5 L245.6 572.9 L249.8 566.6 L254.6 563.7 L259.4 564.9 L264.3 565.4 L268.4 563.0 L272.7 557.7 L277.1 555.3 L281.2 552.8 L285.0 554.2 L289.8 553.0 L294.7 556.6 L299.0 561.0 L303.2 557.8 L308.0 556.1 L312.3 556.1 L316.9 550.6 L321.3 554.2 L325.7 547.7 L330.3 547.7 L335.1 550.6 L339.5 550.6 L343.8 545.7 L348.4 545.7 L352.8 546.9 L357.1 546.9 L362.0 554.2 L366.6 561.0 L371.4 559.0 L375.8 561.5 L380.1 566.8 L384.2 561.5 L389.1 571.1 L393.4 574.3 L398.0 573.6 L402.9 575.3 L407.2 576.7 L411.6 577.9 L416.2 571.9 L420.5 571.1 L424.9 575.5 L429.5 569.9 L433.8 569.2 L438.7 567.5 L443.0 562.7 L447.2 561.0 L451.5 563.4 L456.3 563.4 L460.9 567.5 L465.8 566.3 L470.1 568.2 L474.5 559.8 L479.1 555.4 L483.5 556.6 L488.3 555.4 L492.6 552.5 L497.2 550.1 L501.6 550.1 L505.7 552.5 L510.1 549.4 L514.9 553.0 L519.3 559.5 L523.4 562.7 L527.7 561.0 L532.3 564.6 L536.7 560.3 L541.5 559.0 L545.9 554.9 L550.5 551.8 L555.0 553.7 L559.4 558.6 L564.2 561.9 L568.3 553.0 L573.2 550.1 L577.5 550.1 L582.1 550.1 L586.5 554.2 L591.3 558.6 L595.7 555.4 L600.3 551.8 L604.6 548.9 L608.7 546.9 L613.1 551.3 L617.4 557.3 L622.3 557.8 L626.9 560.3 L631.2 571.1 L635.6 565.1 L640.2 568.7 L644.5 562.7 L649.4 565.1 L653.7 560.3 L658.6 560.7 L663.2 560.7 L667.5 557.8 L671.9 556.6 L676.5 561.0 L680.8 566.8 L685.7 566.8 L690.0 569.9 L694.6 567.5 L699.5 565.1 L703.4 561.5 L707.5 556.6 L712.3 559.8 L716.7 560.3 L721.3 560.3 L725.6 556.1 L730.0 550.6 L734.6 550.6 L738.9 553.5 L743.3 549.4 L747.9 547.4 L752.7 548.2 L757.1 545.7 L761.4 558.6 L766.0 557.1 L770.4 554.7 L775.2 558.6 L779.6 556.1 L784.2 550.1 L788.5 545.0 L792.9 544.5 L797.5 541.6 L801.9 547.4 L806.7 558.6 L811.0 558.6 L815.6 561.5 L820.0 562.2 L824.4 565.6 L829.0 566.8 L833.3 563.9 L835.0 565.8 L839.8 569.9 L845.9 576.0 L850.7 580.1 L855.6 580.8 L860.4 575.5 L865.3 569.9 L870.1 569.2 L876.1 570.4 L882.2 569.2 L887.0 565.8 L891.9 571.1 L895.5 566.3 L899.9 561.0 L905.2 561.0 L908.8 566.3 L913.7 568.2 L918.5 571.1 L923.3 569.9 L928.2 570.4 L933.0 576.7 L937.9 580.1 L942.7 583.2 L945.8 586.1 L950.0 574.8 L954.8 572.8 L958.9 572.4 L963.3 568.7 L967.6 562.7 L972.5 565.6 L977.3 566.3 L981.4 568.7 L986.3 565.8 L991.1 563.9 L994.7 561.9 L999.6 566.3 L1004.4 560.3 L1009.2 559.8 L1017.7 559.8 L1022.1 556.6 L1026.7 560.7 L1031.0 559.0 L1035.9 557.3 L1040.7 550.6 L1048.0 548.9 L1052.8 544.0 L1057.7 542.1 L1062.5 541.4 L1067.3 547.4 L1071.0 546.5 L1075.8 546.0 L1080.6 554.7 L1085.5 556.1 L1090.3 558.3 L1094.0 557.1 L1098.8 569.4 L1102.4 569.4 L1107.3 565.6 L1112.1 565.1 L1115.0 564.4 L1119.0 566.5 L1123.0 571.0" fill="none" stroke="#33353b" stroke-width="1.7" stroke-linejoin="round" stroke-linecap="round"/>
<path d="M1119.2 305.6L1123.6 307.7L1119.2 309.8Z" fill="#9a90bd"/>
<text x="1103.80" y="312.0" style="font-size:9.6px;fill:#444;letter-spacing:1.03px;">1.8</text>
<text x="1103.80" y="355.0" style="font-size:9.6px;fill:#444;letter-spacing:1.03px;">1.7</text>
<text x="1103.80" y="398.1" style="font-size:9.6px;fill:#444;letter-spacing:1.03px;">1.6</text>
<text x="1103.80" y="440.8" style="font-size:9.6px;fill:#444;letter-spacing:1.03px;">1.5</text>
<text x="1103.80" y="483.7" style="font-size:9.6px;fill:#444;letter-spacing:1.03px;">1.4</text>
<text x="1103.80" y="526.6" style="font-size:9.6px;fill:#444;letter-spacing:1.03px;">1.3</text>
<text x="1104.50" y="565.4" style="font-size:9.6px;fill:#444;letter-spacing:4.04px;">50</text>
<text x="1112.60" y="599.2" style="font-size:9.6px;fill:#444;">0</text>
<path d="M31.4 745.1 L40.6 745.1 L44.6 739.5 L64.3 738.8 L80.7 737.8 L97.1 739.5 L113.5 738.5 L129.9 737.2 L146.4 738.8 L162.8 738.8 L179.2 737.8 L195.6 735.5 L212.0 735.2 L228.5 734.6 L244.9 734.6 L258.0 733.6 L271.2 735.2 L284.3 734.6 L294.2 733.9 L304.0 729.0 L310.6 730.3 L320.4 730.3 L330.3 732.9 L340.1 733.6 L353.3 731.9 L366.4 729.6 L373.0 727.3 L379.5 728.6 L386.1 729.6 L391.6 727.3 L399.8 728.6 L409.6 731.3 L417.8 727.3 L424.4 726.3 L434.3 730.6 L440.8 728.6 L450.7 728.6 L463.8 728.0 L477.0 728.0 L490.1 728.6 L498.3 729.6 L516.4 728.0 L529.5 729.6 L544.3 731.9 L555.8 729.6 L568.9 726.7 L582.0 729.6 L595.2 728.0 L608.3 726.3 L621.5 724.7 L634.6 724.0 L647.7 722.1 L657.6 718.8 L667.4 722.1 L677.3 720.8 L687.1 723.1 L697.0 722.1 L705.2 720.8 L711.8 718.1 L723.3 719.8 L736.4 719.8 L749.5 720.8 L755.0 721.4 L768.1 722.1 L781.3 721.4 L797.7 723.1 L814.1 722.1 L822.3 724.0 L830.5 721.4 L847.0 721.4 L863.4 719.8 L883.1 718.1 L896.2 720.4 L912.6 720.8 L929.1 721.4 L945.5 722.1 L958.6 724.0 L966.8 716.5 L978.3 717.5 L991.5 716.5 L1007.9 715.5 L1017.7 715.5 L1027.6 718.1 L1044.0 717.5 L1060.4 717.2 L1076.8 717.2 L1093.3 716.5 L1111.3 715.8 L1111.3 748.7 L31.4 748.7Z" fill="#f2f7fc"/>
<path d="M40.6 712.5V748.7" stroke="#e0e0e0" stroke-width="1"/>
<path d="M152.9 712.5V748.7" stroke="#e0e0e0" stroke-width="1"/>
<path d="M257.4 712.5V748.7" stroke="#e0e0e0" stroke-width="1"/>
<path d="M367.4 712.5V748.7" stroke="#e0e0e0" stroke-width="1"/>
<path d="M472 712.5V748.7" stroke="#e0e0e0" stroke-width="1"/>
<path d="M583 712.5V748.7" stroke="#e0e0e0" stroke-width="1"/>
<path d="M691.1 712.5V748.7" stroke="#e0e0e0" stroke-width="1"/>
<path d="M801 712.5V748.7" stroke="#e0e0e0" stroke-width="1"/>
<path d="M906.1 712.5V748.7" stroke="#e0e0e0" stroke-width="1"/>
<path d="M1018.7 712.5V748.7" stroke="#e0e0e0" stroke-width="1"/>
<rect x="502.4" y="712.5" width="203.6" height="36.2" fill="rgba(102,133,194,0.32)"/>
<path d="M31.4 745.1 L40.6 745.1 L44.6 739.5 L64.3 738.8 L80.7 737.8 L97.1 739.5 L113.5 738.5 L129.9 737.2 L146.4 738.8 L162.8 738.8 L179.2 737.8 L195.6 735.5 L212.0 735.2 L228.5 734.6 L244.9 734.6 L258.0 733.6 L271.2 735.2 L284.3 734.6 L294.2 733.9 L304.0 729.0 L310.6 730.3 L320.4 730.3 L330.3 732.9 L340.1 733.6 L353.3 731.9 L366.4 729.6 L373.0 727.3 L379.5 728.6 L386.1 729.6 L391.6 727.3 L399.8 728.6 L409.6 731.3 L417.8 727.3 L424.4 726.3 L434.3 730.6 L440.8 728.6 L450.7 728.6 L463.8 728.0 L477.0 728.0 L490.1 728.6 L498.3 729.6 L516.4 728.0 L529.5 729.6 L544.3 731.9 L555.8 729.6 L568.9 726.7 L582.0 729.6 L595.2 728.0 L608.3 726.3 L621.5 724.7 L634.6 724.0 L647.7 722.1 L657.6 718.8 L667.4 722.1 L677.3 720.8 L687.1 723.1 L697.0 722.1 L705.2 720.8 L711.8 718.1 L723.3 719.8 L736.4 719.8 L749.5 720.8 L755.0 721.4 L768.1 722.1 L781.3 721.4 L797.7 723.1 L814.1 722.1 L822.3 724.0 L830.5 721.4 L847.0 721.4 L863.4 719.8 L883.1 718.1 L896.2 720.4 L912.6 720.8 L929.1 721.4 L945.5 722.1 L958.6 724.0 L966.8 716.5 L978.3 717.5 L991.5 716.5 L1007.9 715.5 L1017.7 715.5 L1027.6 718.1 L1044.0 717.5 L1060.4 717.2 L1076.8 717.2 L1093.3 716.5 L1111.3 715.8" fill="none" stroke="#8db4e2" stroke-width="1" stroke-linejoin="round" stroke-linecap="round"/>
<path d="M19.5 712.5H1123.3" stroke="#cccccc" stroke-width="1.2"/>
<text x="44.40" y="745.0" style="font-size:10px;fill:#8a8a8a;letter-spacing:1.15px;">Jul '20</text>
<text x="156.50" y="745.0" style="font-size:10px;fill:#8a8a8a;letter-spacing:0.59px;">Jan '21</text>
<text x="260.80" y="745.0" style="font-size:10px;fill:#8a8a8a;letter-spacing:1.15px;">Jul '21</text>
<text x="371.00" y="745.0" style="font-size:10px;fill:#8a8a8a;letter-spacing:0.59px;">Jan '22</text>
<text x="475.30" y="745.0" style="font-size:10px;fill:#8a8a8a;letter-spacing:1.15px;">Jul '22</text>
<text x="587.00" y="745.0" style="font-size:10px;fill:#8a8a8a;letter-spacing:0.59px;">Jan '23</text>
<text x="693.70" y="745.0" style="font-size:10px;fill:#8a8a8a;letter-spacing:1.15px;">Jul '23</text>
<text x="804.30" y="745.0" style="font-size:10px;fill:#8a8a8a;letter-spacing:0.59px;">Jan '24</text>
<text x="910.00" y="745.0" style="font-size:10px;fill:#8a8a8a;letter-spacing:1.15px;">Jul '24</text>
<text x="1021.70" y="745.0" style="font-size:10px;fill:#8a8a8a;letter-spacing:0.59px;">Jan '25</text>
<rect x="498.8" y="723.4" width="7.6" height="12.4" rx="1" fill="#f2f2f2" stroke="#999" stroke-width="1"/><path d="M501.7 726.4V732.8M503.5 726.4V732.8" stroke="#888" stroke-width="0.8"/>
<rect x="702.0" y="723.4" width="7.6" height="12.4" rx="1" fill="#f2f2f2" stroke="#999" stroke-width="1"/><path d="M704.9 726.4V732.8M706.7 726.4V732.8" stroke="#888" stroke-width="0.8"/>
<rect x="19.5" y="748.7" width="1103.8" height="12.8" fill="#f2f2f2"/>
<rect x="502.4" y="748.7" width="203.6" height="12.8" fill="#c4c4c4"/>
<path d="M602.6 752.4V757.8M604.6 752.4V757.8M606.6 752.4V757.8" stroke="#222" stroke-width="1"/>
<rect x="18.6" y="748.7" width="12.8" height="12.8" fill="#e6e6e6" stroke="#ccc" stroke-width="0.8"/><path d="M26.8 752.6V757.8L23.4 755.2Z" fill="#222"/>
<rect x="1110.4" y="748.7" width="12.8" height="12.8" fill="#e6e6e6" stroke="#ccc" stroke-width="0.8"/><path d="M1115.4 752.6V757.8L1118.8 755.2Z" fill="#222"/>
<path d="M325.2 782.3H338.90000000000003" stroke="#33353b" stroke-width="1.7"/>
<text x="343.90" y="786.3" style="font-size:11px;fill:#333;font-weight:bold;letter-spacing:0.73px;">RSI (10)</text>
<path d="M410.4 782.3H424.20000000000005" stroke="#8fe780" stroke-width="1.7"/>
<text x="430.00" y="786.3" style="font-size:11px;fill:#333;font-weight:bold;letter-spacing:0.60px;">RSI (30)</text>
<path d="M495.59999999999997 782.3H509.40000000000003" stroke="#f19a49" stroke-width="1.7"/>
<text x="514.80" y="786.3" style="font-size:11px;fill:#333;font-weight:bold;letter-spacing:0.98px;">WMA (10)</text>
<path d="M592.9 782.3H606.6" stroke="#6f6fd6" stroke-width="1.7"/>
<text x="611.00" y="786.3" style="font-size:11px;fill:#333;font-weight:bold;letter-spacing:1.07px;">WMA (30)</text>
<path d="M689.1999999999999 782.3H702.9" stroke="#d4d4d4" stroke-width="1.7"/>
<text x="708.30" y="786.3" style="font-size:11px;fill:#cccccc;font-weight:bold;letter-spacing:1.03px;">Trend</text>
<path d="M763.4 782.3H777.1" stroke="#cfcfcf" stroke-width="1.7"/>
<text x="782.50" y="786.3" style="font-size:11px;fill:#cccccc;font-weight:bold;letter-spacing:0.89px;">BB (30, 2)</text>
<text x="1029.80" y="802.0" style="font-size:9px;fill:#555;letter-spacing:0.83px;">UfqiFina with HighCharts</text></svg>
</body></html>
